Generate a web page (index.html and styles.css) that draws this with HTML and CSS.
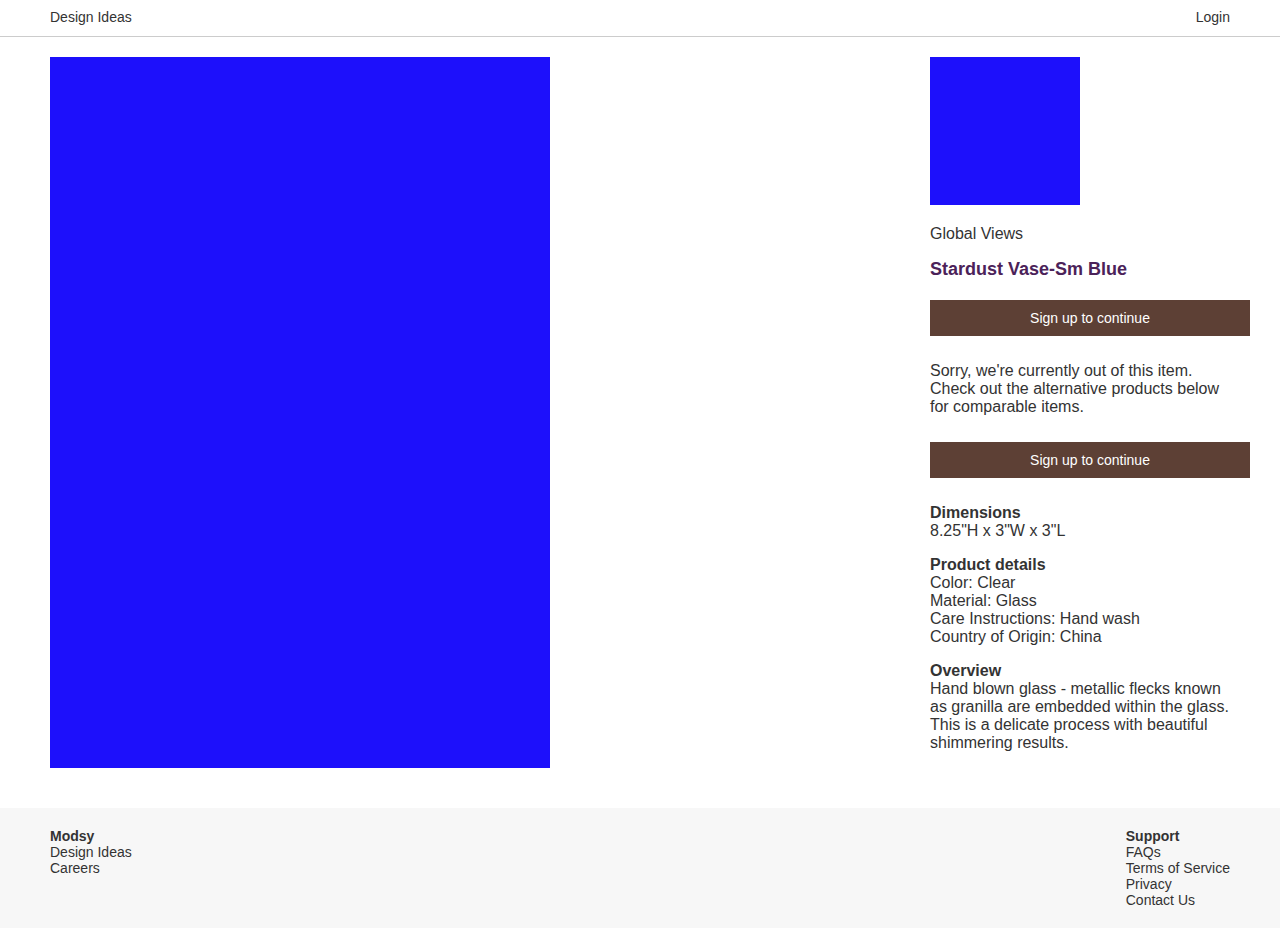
FILE: index.html
```html
<!DOCTYPE html>
<html lang="en">
<head>
<meta charset="utf-8">
<title>Stardust Vase-Sm Blue</title>
<link rel="stylesheet" href="styles.css">
</head>
<body>
<header class="topbar">
  <a class="topbar-link" href="#">Design Ideas</a>
  <a class="topbar-link" href="#">Login</a>
</header>
<main class="product">
  <div class="hero-image"></div>
  <section class="info">
    <div class="thumb"></div>
    <div class="brand">Global Views</div>
    <h1 class="title">Stardust Vase-Sm Blue</h1>
    <button class="cta cta-first">Sign up to continue</button>
    <p class="notice">Sorry, we're currently out of this item. Check out the alternative products below for comparable items.</p>
    <button class="cta cta-second">Sign up to continue</button>
    <div class="spec spec-first">
      <div class="spec-head">Dimensions</div>
      <div>8.25"H x 3"W x 3"L</div>
    </div>
    <div class="spec">
      <div class="spec-head">Product details</div>
      <div>Color: Clear</div>
      <div>Material: Glass</div>
      <div>Care Instructions: Hand wash</div>
      <div>Country of Origin: China</div>
    </div>
    <div class="spec">
      <div class="spec-head">Overview</div>
      <div>Hand blown glass - metallic flecks known as granilla are embedded within the glass. This is a delicate process with beautiful shimmering results.</div>
    </div>
  </section>
</main>
<footer class="footer">
  <div class="footer-col">
    <div class="footer-head">Modsy</div>
    <a href="#">Design Ideas</a>
    <a href="#">Careers</a>
  </div>
  <div class="footer-col">
    <div class="footer-head">Support</div>
    <a href="#">FAQs</a>
    <a href="#">Terms of Service</a>
    <a href="#">Privacy</a>
    <a href="#">Contact Us</a>
  </div>
</footer>
</body>
</html>
```
FILE: styles.css
```css
* { box-sizing: border-box; }
html, body { margin: 0; padding: 0; }
body {
  font-family: "Liberation Sans", Arial, sans-serif;
  color: #333;
  background: #fff;
}
a { color: inherit; text-decoration: none; }

.topbar {
  height: 37px;
  border-bottom: 1px solid #ccc;
  display: flex;
  align-items: center;
  justify-content: space-between;
  padding: 0 50px 3px;
  font-size: 14px;
}

.product {
  display: flex;
  justify-content: space-between;
  align-items: flex-start;
  padding: 20px 30px 40px 50px;
}
.hero-image {
  width: 500px;
  height: 711px;
  background: #1d10fb;
}
.info {
  width: 320px;
  font-size: 16px;
  line-height: 18px;
}
.thumb {
  width: 150px;
  height: 148px;
  background: #1d10fb;
}
.brand { margin-top: 20px; }
.title {
  margin: 16px 0 0;
  font-size: 18px;
  line-height: 20px;
  font-weight: bold;
  color: #4b2259;
}
.cta {
  display: block;
  width: 320px;
  height: 36px;
  border: 0;
  background: #5d4035;
  color: #fff;
  font-family: "Liberation Sans", Arial, sans-serif;
  font-size: 14px;
  padding: 0;
  cursor: pointer;
}
.cta-first { margin-top: 21px; }
.cta-second { margin-top: 26px; }
.notice {
  margin: 26px 0 0;
  width: 305px;
}
.spec { margin-top: 16px; width: 305px; }
.spec-first { margin-top: 26px; }
.spec-head { font-weight: bold; }

.footer {
  background: #f7f7f7;
  display: flex;
  justify-content: space-between;
  padding: 20px 50px;
  font-size: 14px;
  line-height: 16px;
  min-height: 120px;
}
.footer-col { display: flex; flex-direction: column; }
.footer-head { font-weight: bold; }
```
